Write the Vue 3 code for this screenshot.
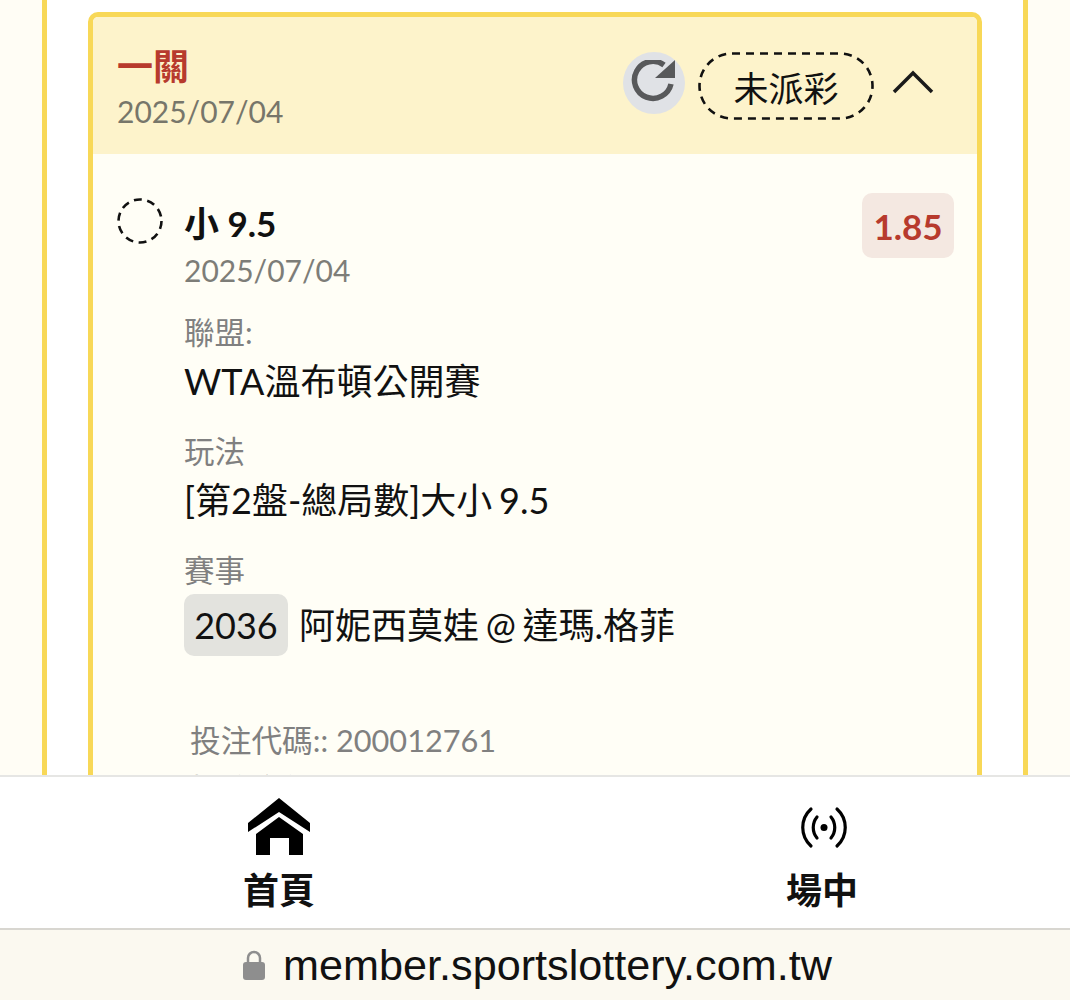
<template>
  <div class="page">
    <main class="scroll">
      <div class="sheet">
        <section class="card">
          <header class="card-head">
            <div class="head-left">
              <div class="pass-type">一關</div>
              <div class="pass-date">2025/07/04</div>
            </div>
            <div class="head-right">
              <span class="refresh">
                <svg width="46" height="46" viewBox="0 0 46 46">
                  <path d="M40 24A18.500 18.500 0 1 1 33 5" fill="none" stroke="#58595b" stroke-width="5.500" />
                  <path d="M44 0V18H24z" fill="#58595b" />
                </svg>
              </span>
              <span class="status">
                <svg class="dash" width="176" height="68" viewBox="0 0 176 68">
                  <rect x="1.500" y="1.500" width="173" height="65" rx="32.500" fill="none" stroke="#111" stroke-width="2.600" stroke-dasharray="8 6" />
                </svg>
                未派彩
              </span>
              <svg class="chevron" width="44" height="26" viewBox="0 0 44 26">
                <path d="M2 22L21 3L40 22" fill="none" stroke="#1a1a1a" stroke-width="3.500" />
              </svg>
            </div>
          </header>
          <div class="card-body">
            <div class="bet-row">
              <svg class="bet-dot" width="46" height="46" viewBox="0 0 46 46">
                <circle cx="23" cy="23" r="21.500" fill="none" stroke="#111" stroke-width="2.600" stroke-dasharray="8 5.500" />
              </svg>
              <div class="bet-info">
                <div class="bet-top">
                  <div>
                    <div class="bet-name">小 9.5</div>
                    <div class="bet-date">2025/07/04</div>
                  </div>
                  <span class="odds">1.85</span>
                </div>
                <div v-for="f in fields" :key="f.label" class="field">
                  <div class="field-label">{{ f.label }}</div>
                  <div class="field-value">{{ f.value }}</div>
                </div>
                <div class="field">
                  <div class="field-label">賽事</div>
                  <div class="match">
                    <span class="match-no">2036</span>
                    <span class="match-name">阿妮西莫娃 @ 達瑪.格菲</span>
                  </div>
                </div>
              </div>
            </div>
            <div class="code">投注代碼:: 200012761</div>
            <div class="code">投注金額</div>
          </div>
        </section>
      </div>
    </main>

    <nav class="tabbar">
      <div class="tab">
        <svg width="66" height="60" viewBox="0 0 66 60">
          <path d="M33 1L64 26V35L33 15L2 35V26z" fill="#000" />
          <path d="M33 20L57 37V58H43V41H24V58H10V37z" fill="#000" />
        </svg>
        <span class="tab-label">首頁</span>
      </div>
      <div class="tab">
        <svg width="70" height="60" viewBox="-2 0 70 60">
          <circle cx="35" cy="30.500" r="3.500" fill="#000" />
          <g fill="none" stroke="#000" stroke-width="3.200" stroke-linecap="round">
            <path d="M28 20C23 26 23 35 28 41" />
            <path d="M42 20C47 26 47 35 42 41" />
            <path d="M22 12C11 22 11 39 22 49" />
            <path d="M48 12C59 22 59 39 48 49" />
          </g>
        </svg>
        <span class="tab-label">場中</span>
      </div>
    </nav>

    <footer class="urlbar">
      <svg width="24" height="32" viewBox="0 0 24 32">
        <path d="M6 15V9a6 6 0 0 1 12 0v6" fill="none" stroke="#8e8e8e" stroke-width="2.500" />
        <rect x="1" y="13" width="22" height="18" rx="3" fill="#8e8e8e" />
      </svg>
      <span class="url">member.sportslottery.com.tw</span>
    </footer>
  </div>
</template>

<script setup>
const fields = [
  { label: '聯盟:', value: 'WTA溫布頓公開賽' },
  { label: '玩法', value: '[第2盤-總局數]大小 9.5' },
]
</script>

<style>
body {
  background: #fffdf5;
}
</style>

<style scoped>
.page {
  height: 1000px;
  display: flex;
  flex-direction: column;
  overflow: hidden;
  font-family: Lato, "Noto Sans CJK TC", sans-serif;
}

.scroll {
  flex: 1;
  min-height: 0;
  overflow: hidden;
  background: #fffdf5;
  padding: 0 42px;
}

.sheet {
  background: #fff;
  border-left: 5px solid #f8d857;
  border-right: 5px solid #f8d857;
  padding: 12px 41px 0;
}

/* ===== card ===== */
.card {
  border: 5px solid #f8d857;
  border-radius: 10px;
  background: #fffef6;
  overflow: hidden;
}

.card-head {
  height: 137px;
  box-sizing: border-box;
  background: #fdf3cb;
  display: flex;
  align-items: flex-start;
  justify-content: space-between;
  padding: 29px 41px 0 24px;
}

.pass-type {
  font-size: 36px;
  line-height: 40px;
  font-weight: 700;
  color: #b73a2d;
}

.pass-date {
  font-size: 30px;
  line-height: 38px;
  margin-top: 6px;
  color: #77766a;
}

.head-right {
  display: flex;
  align-items: flex-start;
  margin-top: 6px;
}

.refresh {
  width: 62px;
  height: 62px;
  border-radius: 50%;
  background: #e0e2e6;
  display: flex;
  align-items: center;
  justify-content: center;
}

.status {
  position: relative;
  width: 176px;
  height: 68px;
  margin-left: 13px;
  display: flex;
  align-items: center;
  justify-content: center;
  font-size: 35px;
  color: #111;
}

.dash {
  position: absolute;
  inset: 0;
}

.chevron {
  margin-left: 18px;
  margin-top: 18px;
}

.card-body {
  padding: 39px 23px 70px 24px;
}

.bet-row {
  display: flex;
  align-items: flex-start;
}

.bet-dot {
  flex-shrink: 0;
  margin-top: 5px;
}

.bet-info {
  flex: 1;
  margin-left: 21px;
}

.bet-top {
  display: flex;
  justify-content: space-between;
  align-items: flex-start;
  margin-bottom: -2px;
}

.bet-name {
  font-size: 35px;
  line-height: 48px;
  margin-top: 6px;
  font-weight: 700;
  color: #111;
}

.bet-date {
  font-size: 30px;
  line-height: 38px;
  margin-top: 4px;
  color: #7d7d78;
}

.odds {
  width: 92px;
  height: 65px;
  border-radius: 10px;
  background: #f4e8e1;
  display: flex;
  align-items: center;
  justify-content: center;
  font-size: 35px;
  font-weight: 700;
  color: #b73a2d;
}

.field {
  margin-top: 25px;
}

.field-label {
  font-size: 30.500px;
  line-height: 40px;
  margin-bottom: 4px;
  color: #808080;
}

.field-value,
.match {
  font-size: 36px;
  line-height: 50px;
  color: #111;
  word-spacing: -2.500px;
}

.match {
  display: flex;
  align-items: center;
  gap: 11px;
  margin-top: 2px;
}

.match-no {
  width: 104px;
  height: 62px;
  border-radius: 10px;
  background: #e3e3de;
  display: flex;
  align-items: center;
  justify-content: center;
}

.code {
  font-size: 30.700px;
  line-height: 49px;
  color: #808080;
  margin-left: 73px;
}

.bet-row + .code {
  margin-top: 60px;
}

/* ===== tab bar ===== */
.tabbar {
  height: 155px;
  flex-shrink: 0;
  box-sizing: border-box;
  background: #fff;
  border-top: 2px solid #e6e6e4;
  border-bottom: 2px solid #d8d6d0;
  display: grid;
  grid-template-columns: 558px 512px;
  padding-top: 20px;
}

.tab {
  display: flex;
  flex-direction: column;
  align-items: center;
}

.tab + .tab {
  padding-left: 16px;
}

.tab-label {
  font-size: 36px;
  line-height: 48px;
  margin-top: 9px;
  font-weight: 700;
  color: #111;
}

/* ===== url bar ===== */
.urlbar {
  height: 70px;
  flex-shrink: 0;
  background: #fbf9f0;
  display: flex;
  align-items: center;
  justify-content: center;
  gap: 17px;
  padding-left: 4px;
}

.url {
  font-family: "Liberation Sans", Arial, sans-serif;
  font-size: 43.200px;
  color: #111;
}
</style>
